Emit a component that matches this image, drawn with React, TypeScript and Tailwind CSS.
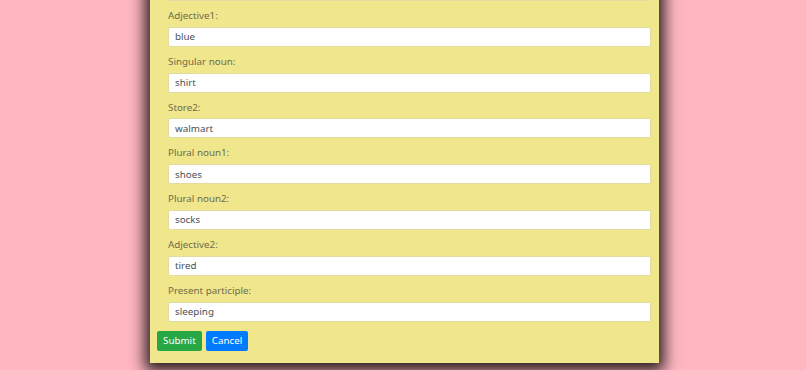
const fields = [
  { label: "Adjective1:", value: "blue" },
  { label: "Singular noun:", value: "shirt" },
  { label: "Store2:", value: "walmart" },
  { label: "Plural noun1:", value: "shoes" },
  { label: "Plural noun2:", value: "socks" },
  { label: "Adjective2:", value: "tired" },
  { label: "Present participle:", value: "sleeping" },
];

function TextInput({ value }: { value: string }) {
  return (
    <input
      type="text"
      defaultValue={value}
      className="block w-full h-[20px] px-[6px] bg-white border border-[#e2dca0] rounded-[2px] text-[9.8px] text-[#495057] outline-none"
    />
  );
}

export default function App() {
  return (
    <div
      className="h-[370px] w-full bg-[#ffb6c1] overflow-hidden"
      style={{ fontFamily: '"Noto Sans", "Open Sans", sans-serif' }}
    >
      <div className="ml-[150px] w-[509px] -mt-[19px] bg-[#f0e68c] px-[7px] pb-[12px] shadow-[0_3px_14px_5px_rgba(0,0,0,0.85)]">
        <div className="pl-[11px] pr-[1px]">
          <TextInput value="" />
          {fields.map((f) => (
            <div key={f.label}>
              <label className="block mt-[9px] mb-[4.8px] leading-[12px] text-[9.8px] text-[#6f6b4c]">
                {f.label}
              </label>
              <TextInput value={f.value} />
            </div>
          ))}
        </div>
        <div className="flex gap-[4px] mt-[9.5px]">
          <button className="h-[20px] px-[6px] rounded-[2px] bg-[#28a745] text-white text-[9.8px] leading-none">
            Submit
          </button>
          <button className="h-[20px] px-[6px] rounded-[2px] bg-[#007bff] text-white text-[9.8px] leading-none">
            Cancel
          </button>
        </div>
      </div>
    </div>
  );
}
